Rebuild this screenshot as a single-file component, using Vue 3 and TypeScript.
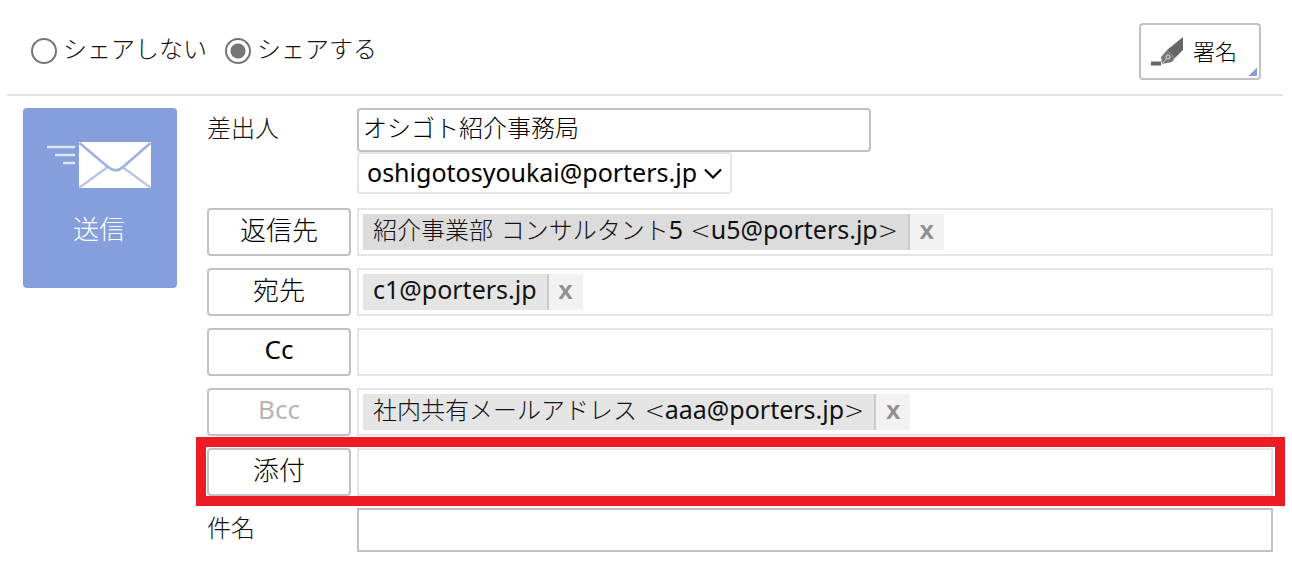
<script setup lang="ts">
import { ref } from 'vue'

interface Chip {
  text: string
  selected?: boolean
}

interface AddressRow {
  id: string
  label: string
  chips: Chip[]
  disabled?: boolean
  highlighted?: boolean
}

interface Run {
  text: string
  kind: 'latin' | 'symbol' | 'japanese'
}

const share = ref('yes')
const senderName = ref('オシゴト紹介事務局')
const senderAddress = ref('oshigotosyoukai@porters.jp')
const subject = ref('')

const rows = ref<AddressRow[]>([
  {
    id: 'reply',
    label: '返信先',
    chips: [{ text: '紹介事業部 コンサルタント5 <u5@porters.jp>', selected: true }],
  },
  { id: 'to', label: '宛先', chips: [{ text: 'c1@porters.jp' }] },
  { id: 'cc', label: 'Cc', chips: [] },
  {
    id: 'bcc',
    label: 'Bcc',
    chips: [{ text: '社内共有メールアドレス <aaa@porters.jp>' }],
    disabled: true,
  },
  { id: 'attach', label: '添付', chips: [], highlighted: true },
])

// Splits a chip's text into runs so that each script gets its own type style.
function runs(text: string): Run[] {
  return (text.match(/[<> ]+|[!-;=?-~]+|[^ -~]+/g) ?? []).map((part) => ({
    text: part,
    kind: /^[<> ]/.test(part) ? 'symbol' : /^[!-~]/.test(part) ? 'latin' : 'japanese',
  }))
}

function isLatin(text: string): boolean {
  return /^[!-~]+$/.test(text)
}

function removeChip(row: AddressRow, index: number): void {
  row.chips.splice(index, 1)
}
</script>

<template>
  <form class="mail" @submit.prevent>
    <header class="top">
      <div class="share" role="radiogroup" aria-label="シェア">
        <label class="option">
          <input v-model="share" type="radio" name="share" value="no" />
          <span>シェアしない</span>
        </label>
        <label class="option">
          <input v-model="share" type="radio" name="share" value="yes" />
          <span>シェアする</span>
        </label>
      </div>
      <button type="button" class="signature">
        <svg class="pen" viewBox="0 0 34 30" aria-hidden="true">
          <path d="M1 24.500h10v4H1z" fill="#666" />
          <path d="M33 0v13L25 21 17 13z" fill="#666" />
          <path d="M17 13l8 8-3 4-10 2-1-7z" fill="#777" />
          <path d="M12 27l5-6" stroke="#ccc" stroke-width="1" />
          <circle cx="18" cy="20" r="2" fill="#777" stroke="#ddd" stroke-width="1" />
        </svg>
        <span>署名</span>
      </button>
    </header>

    <div class="body">
      <button type="submit" class="send">
        <svg class="envelope" viewBox="0 0 106 48" aria-hidden="true">
          <g stroke="#e1e8f7" stroke-width="2.4" stroke-linecap="round">
            <path d="M2 6h26M10 14h18M18 22h10" />
          </g>
          <path d="M33 1h72v46H33z" fill="#fff" />
          <g fill="none" stroke="#b5c5ea" stroke-width="2.2">
            <path d="M33.500 46.500L61 26.500M104.500 46.500L77 26.500" />
            <path d="M33.500 2L62 26Q70 32.500 77 26L104.500 2" stroke="#9db2e2" stroke-width="2.600" />
          </g>
        </svg>
        <span>送信</span>
      </button>

      <div class="fields">
        <div class="row sender">
          <label class="caption" for="sender-name">差出人</label>
          <div class="sender-inputs">
            <input id="sender-name" v-model="senderName" class="text name" type="text" />
            <div class="picker">
              <select v-model="senderAddress" aria-label="差出人アドレス">
                <option>oshigotosyoukai@porters.jp</option>
              </select>
              <svg class="chevron" viewBox="0 0 18 11" aria-hidden="true">
                <path d="M1 1.500l8 8 8-8" fill="none" stroke="#000" stroke-width="2.200" />
              </svg>
            </div>
          </div>
        </div>

        <div v-for="row in rows" :key="row.id" class="row" :class="{ highlighted: row.highlighted }">
          <button type="button" class="pick" :class="{ regular: isLatin(row.label) }" :disabled="row.disabled">{{ row.label }}</button>
          <div class="box">
            <span v-for="(chip, i) in row.chips" :key="chip.text" class="chip" :class="{ selected: chip.selected }">
              <span class="chip-text"><span v-for="(run, n) in runs(chip.text)" :key="n" :class="run.kind">{{ run.text }}</span></span>
              <button type="button" class="remove" @click="removeChip(row, i)">x</button>
            </span>
            <input class="entry" type="text" :aria-label="row.label" />
          </div>
        </div>

        <div class="row">
          <label class="caption" for="subject">件名</label>
          <input id="subject" v-model="subject" class="text subject" type="text" />
        </div>
      </div>
    </div>
  </form>
</template>

<style>
body {
  margin: 0;
  background: #fff;
}
</style>

<style scoped>
.mail,
.mail button,
.mail input,
.mail select {
  font-family: 'Noto Sans', 'Noto Sans CJK JP', sans-serif;
  font-weight: 300;
}

.mail {
  padding: 0 9px 16px 7px;
  font-size: 24px;
  color: #111;
}

.mail *,
.mail *::after {
  box-sizing: border-box;
}

button,
input,
select {
  margin: 0;
}

.top {
  display: flex;
  justify-content: space-between;
  align-items: flex-start;
  padding: 23px 22px 14px 24px;
  border-bottom: 2px solid #e2e2e2;
}

.share {
  display: flex;
  gap: 18px;
  padding-top: 8px;
}

.option {
  display: flex;
  align-items: flex-start;
  gap: 6px;
  line-height: 36px;
}

.option input {
  appearance: none;
  width: 26px;
  height: 26px;
  margin-top: 7px;
  border: 2px solid #757575;
  border-radius: 50%;
  background: #fff;
}

.option input:checked {
  background: radial-gradient(circle, #757575 7px, #fff 8px);
}

.signature {
  position: relative;
  display: flex;
  align-items: center;
  gap: 9px;
  height: 57px;
  padding: 0 22px 0 9px;
  border: 2px solid #c1c1c1;
  border-radius: 4px;
  background: #fff;
  color: #000;
  font-size: 22px;
}

.signature span {
  padding-bottom: 4px;
}

.signature::after {
  content: '';
  position: absolute;
  right: 2px;
  bottom: 2px;
  width: 8px;
  height: 9px;
  background: linear-gradient(135deg, transparent 50%, #859fdc 50%);
}

.pen {
  width: 34px;
  height: 30px;
}

.body {
  display: flex;
  align-items: flex-start;
  gap: 30px;
  padding: 12px 10px 0 16px;
}

.send {
  display: flex;
  flex: none;
  flex-direction: column;
  align-items: center;
  gap: 22px;
  width: 154px;
  height: 180px;
  padding: 33px 2px 0 0;
  border: 0;
  border-radius: 4px;
  background: #859fdc;
  color: #fff;
  font-size: 26px;
  line-height: 36px;
}

.envelope {
  width: 106px;
  height: 48px;
}

.fields {
  display: flex;
  flex: 1;
  flex-direction: column;
  gap: 12px;
  min-width: 0;
}

.row {
  position: relative;
  display: grid;
  grid-template-columns: 144px minmax(0, 1fr);
  column-gap: 6px;
  align-items: start;
}

.sender {
  padding-bottom: 2px;
}

.sender-inputs {
  display: flex;
  flex-direction: column;
  align-items: flex-start;
}

.caption {
  line-height: 40px;
}

.text {
  width: 100%;
  height: 44px;
  padding: 0 4px 8px;
  border: 2px solid #c1c1c1;
  background: #fff;
  color: #000;
  font-size: 24px;
}

.name {
  max-width: 514px;
  border-radius: 4px;
}

.picker {
  position: relative;
}

.mail .picker select {
  display: block;
  appearance: none;
  width: 375px;
  height: 42px;
  padding: 0 30px 3px 8px;
  border: 2px solid #e5e5e5;
  border-radius: 4px;
  background: #fff;
  color: #000;
  font-size: 25px;
  font-weight: 400;
}

.chevron {
  position: absolute;
  top: 16px;
  right: 10px;
  width: 18px;
  height: 11px;
  pointer-events: none;
}

.pick {
  height: 48px;
  padding: 0 0 6px;
  border: 2px solid #c1c1c1;
  border-radius: 4px;
  background: #fff;
  color: #000;
  font-size: 26px;
}

.mail .pick.regular {
  font-weight: 400;
}

.pick:disabled {
  color: #b5b5b5;
}

.box {
  display: flex;
  height: 48px;
  padding: 4px;
  border: 2px solid #e5e5e5;
}

.chip {
  display: flex;
  flex: none;
  height: 36px;
  background: #e5e5e5;
  line-height: 30px;
}

.chip.selected {
  background: #dcdcdc;
}

.chip-text {
  padding: 0 10px;
  white-space: pre;
}

.latin {
  font-size: 25px;
  font-weight: 400;
}

.symbol {
  font-family: 'DejaVu Sans', sans-serif;
  font-size: 24px;
}

.mail .remove {
  width: 36px;
  padding: 0 0 4px;
  border: 0;
  border-left: 2px solid #cacaca;
  background: #f2f2f2;
  color: #909090;
  font-family: 'Liberation Sans', sans-serif;
  font-size: 26px;
  font-weight: 700;
  line-height: 32px;
}

.entry {
  flex: 1;
  min-width: 0;
  padding: 0 4px;
  border: 0;
  background: transparent;
  font-size: 24px;
}

.highlighted::after {
  content: '';
  position: absolute;
  inset: -11px -12px -10px -11px;
  border: 10px solid #ed1c24;
  pointer-events: none;
}
</style>
